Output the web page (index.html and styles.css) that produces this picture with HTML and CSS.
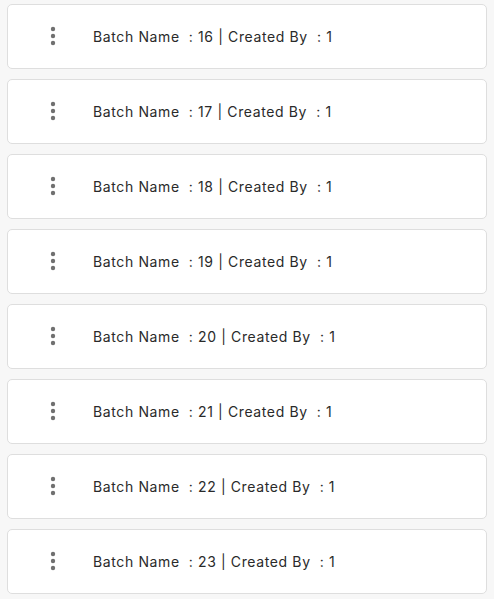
FILE: index.html
```html
<!DOCTYPE html>
<html>
<head>
<meta charset="utf-8">
<link rel="stylesheet" href="styles.css">
</head>
<body>
<div class="list">
  <div class="card"><span class="menu"><svg viewBox="0 0 10 24" width="10" height="24"><circle cx="5" cy="5" r="2.2"/><circle cx="5" cy="12" r="2.2"/><circle cx="5" cy="19" r="2.2"/></svg></span><span class="label">Batch Name  : 16 | Created By  : 1</span></div>
  <div class="card"><span class="menu"><svg viewBox="0 0 10 24" width="10" height="24"><circle cx="5" cy="5" r="2.2"/><circle cx="5" cy="12" r="2.2"/><circle cx="5" cy="19" r="2.2"/></svg></span><span class="label">Batch Name  : 17 | Created By  : 1</span></div>
  <div class="card"><span class="menu"><svg viewBox="0 0 10 24" width="10" height="24"><circle cx="5" cy="5" r="2.2"/><circle cx="5" cy="12" r="2.2"/><circle cx="5" cy="19" r="2.2"/></svg></span><span class="label">Batch Name  : 18 | Created By  : 1</span></div>
  <div class="card"><span class="menu"><svg viewBox="0 0 10 24" width="10" height="24"><circle cx="5" cy="5" r="2.2"/><circle cx="5" cy="12" r="2.2"/><circle cx="5" cy="19" r="2.2"/></svg></span><span class="label">Batch Name  : 19 | Created By  : 1</span></div>
  <div class="card"><span class="menu"><svg viewBox="0 0 10 24" width="10" height="24"><circle cx="5" cy="5" r="2.2"/><circle cx="5" cy="12" r="2.2"/><circle cx="5" cy="19" r="2.2"/></svg></span><span class="label">Batch Name  : 20 | Created By  : 1</span></div>
  <div class="card"><span class="menu"><svg viewBox="0 0 10 24" width="10" height="24"><circle cx="5" cy="5" r="2.2"/><circle cx="5" cy="12" r="2.2"/><circle cx="5" cy="19" r="2.2"/></svg></span><span class="label">Batch Name  : 21 | Created By  : 1</span></div>
  <div class="card"><span class="menu"><svg viewBox="0 0 10 24" width="10" height="24"><circle cx="5" cy="5" r="2.2"/><circle cx="5" cy="12" r="2.2"/><circle cx="5" cy="19" r="2.2"/></svg></span><span class="label">Batch Name  : 22 | Created By  : 1</span></div>
  <div class="card"><span class="menu"><svg viewBox="0 0 10 24" width="10" height="24"><circle cx="5" cy="5" r="2.2"/><circle cx="5" cy="12" r="2.2"/><circle cx="5" cy="19" r="2.2"/></svg></span><span class="label">Batch Name  : 23 | Created By  : 1</span></div>
</div>
</body>
</html>
```

FILE: styles.css
```css
html, body {
  margin: 0;
  padding: 0;
  background: #f7f7f7;
}
.list {
  display: flex;
  flex-direction: column;
  gap: 10px;
  padding: 4px 8px 0 7px;
}
.card {
  box-sizing: border-box;
  width: 480px;
  height: 65px;
  background: #ffffff;
  border: 1px solid #dedede;
  border-radius: 5px;
  display: flex;
  align-items: center;
  padding-left: 40px;
}
.menu {
  display: flex;
  width: 10px;
  height: 24px;
  margin-top: -1px;
}
.menu svg {
  fill: #707070;
}
.label {
  margin-left: 35px;
  font-family: Inter, sans-serif;
  font-size: 14px;
  letter-spacing: 0.62px;
  color: #2a2a2a;
  white-space: pre;
}
```
